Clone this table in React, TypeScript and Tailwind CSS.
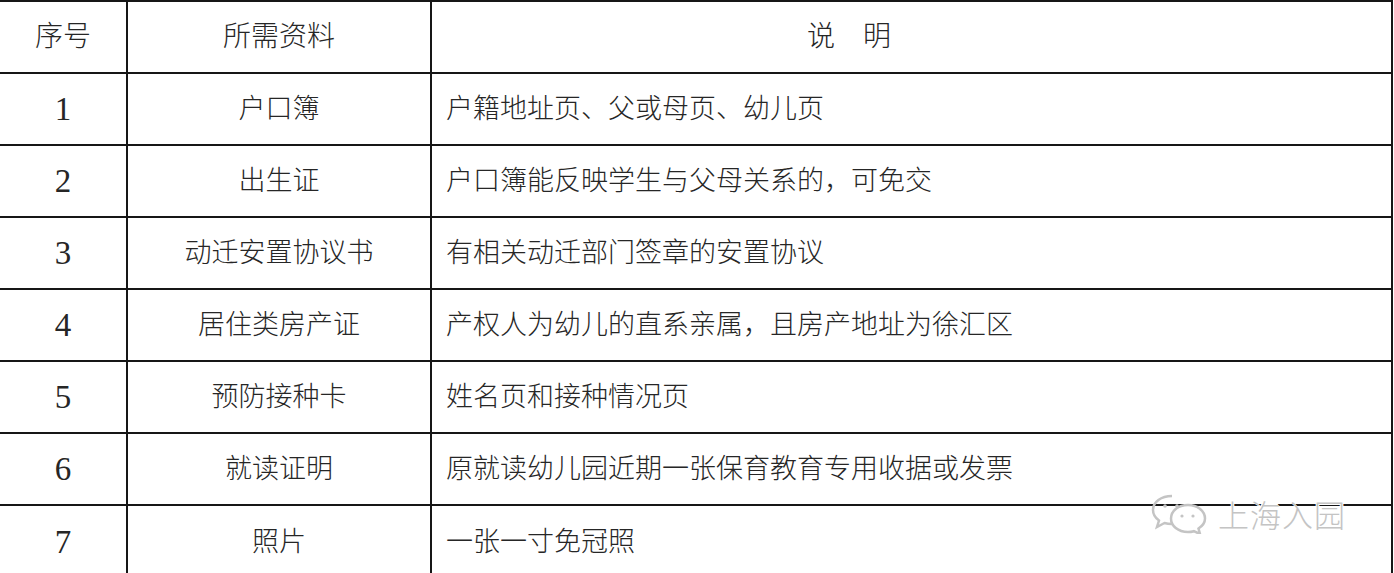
const rows: [string, string, string][] = [
  ['1', '户口簿', '户籍地址页、父或母页、幼儿页'],
  ['2', '出生证', '户口簿能反映学生与父母关系的，可免交'],
  ['3', '动迁安置协议书', '有相关动迁部门签章的安置协议'],
  ['4', '居住类房产证', '产权人为幼儿的直系亲属，且房产地址为徐汇区'],
  ['5', '预防接种卡', '姓名页和接种情况页'],
  ['6', '就读证明', '原就读幼儿园近期一张保育教育专用收据或发票'],
  ['7', '照片', '一张一寸免冠照'],
];

const cjk = "font-['Liberation_Serif','Noto_Sans_CJK_SC',serif]";

const Watermark = () => (
  <div className="absolute left-[1150px] top-[492px] flex items-center gap-2 text-[#c4c4c4]">
    <svg width="60" height="42" viewBox="0 0 60 42" fill="none" stroke="#c4c4c4" strokeWidth="2.5">
      <path d="M22 4C11 4 3 10 3 18c0 4.5 2.5 8 6 10.5L7 35l7.5-4c2.3.7 4.8 1 7.5 1" />
      <circle cx="15" cy="14" r="1.8" fill="#c4c4c4" stroke="none" />
      <circle cx="27" cy="14" r="1.8" fill="#c4c4c4" stroke="none" />
      <path d="M38 13c-10 0-17 6-17 13.5S28 40 38 40c2 0 4-.3 5.8-.8L50 42l-1.5-5.5c4-2.5 6.5-6 6.5-10C55 19 47.5 13 38 13z" />
      <circle cx="32" cy="24" r="1.6" fill="#c4c4c4" stroke="none" />
      <circle cx="43" cy="24" r="1.6" fill="#c4c4c4" stroke="none" />
    </svg>
    <span className="text-[31px] leading-none font-['Noto_Sans_CJK_SC',sans-serif] font-light tracking-[1px] [text-shadow:1px_1px_0_#fff,-1px_-1px_0_#fff]">
      上海入园
    </span>
  </div>
);

export default function App() {
  return (
    <div className={`relative w-[1394px] h-[573px] overflow-hidden bg-white text-[#262626] font-light ${cjk}`}>
      <div className="w-[1393px] border-t-2 border-[#161616]">
        <div className="flex h-[72px] border-b-2 border-[#161616] text-[28px] leading-none">
          <div className="w-[128px] shrink-0 border-r-2 border-[#161616] flex items-center justify-center">序号</div>
          <div className="w-[304px] shrink-0 border-r-2 border-[#161616] flex items-center justify-center">所需资料</div>
          <div className="flex-1 border-r-2 border-[#161616] flex items-center pl-[375px]">说&nbsp;&nbsp;&nbsp;&nbsp;明</div>
        </div>
        {rows.map(([n, name, desc], i) => (
          <div
            key={n}
            className={`flex text-[27px] leading-none ${i === rows.length - 1 ? 'h-[72px]' : 'h-[72px] border-b-2 border-[#161616]'}`}
          >
            <div className="w-[128px] shrink-0 border-r-2 border-[#161616] flex items-center justify-center text-[33px]">{n}</div>
            <div className="w-[304px] shrink-0 border-r-2 border-[#161616] flex items-center justify-center">{name}</div>
            <div className="flex-1 border-r-2 border-[#161616] flex items-center pl-[14px]">{desc}</div>
          </div>
        ))}
      </div>
      <Watermark />
    </div>
  );
}
